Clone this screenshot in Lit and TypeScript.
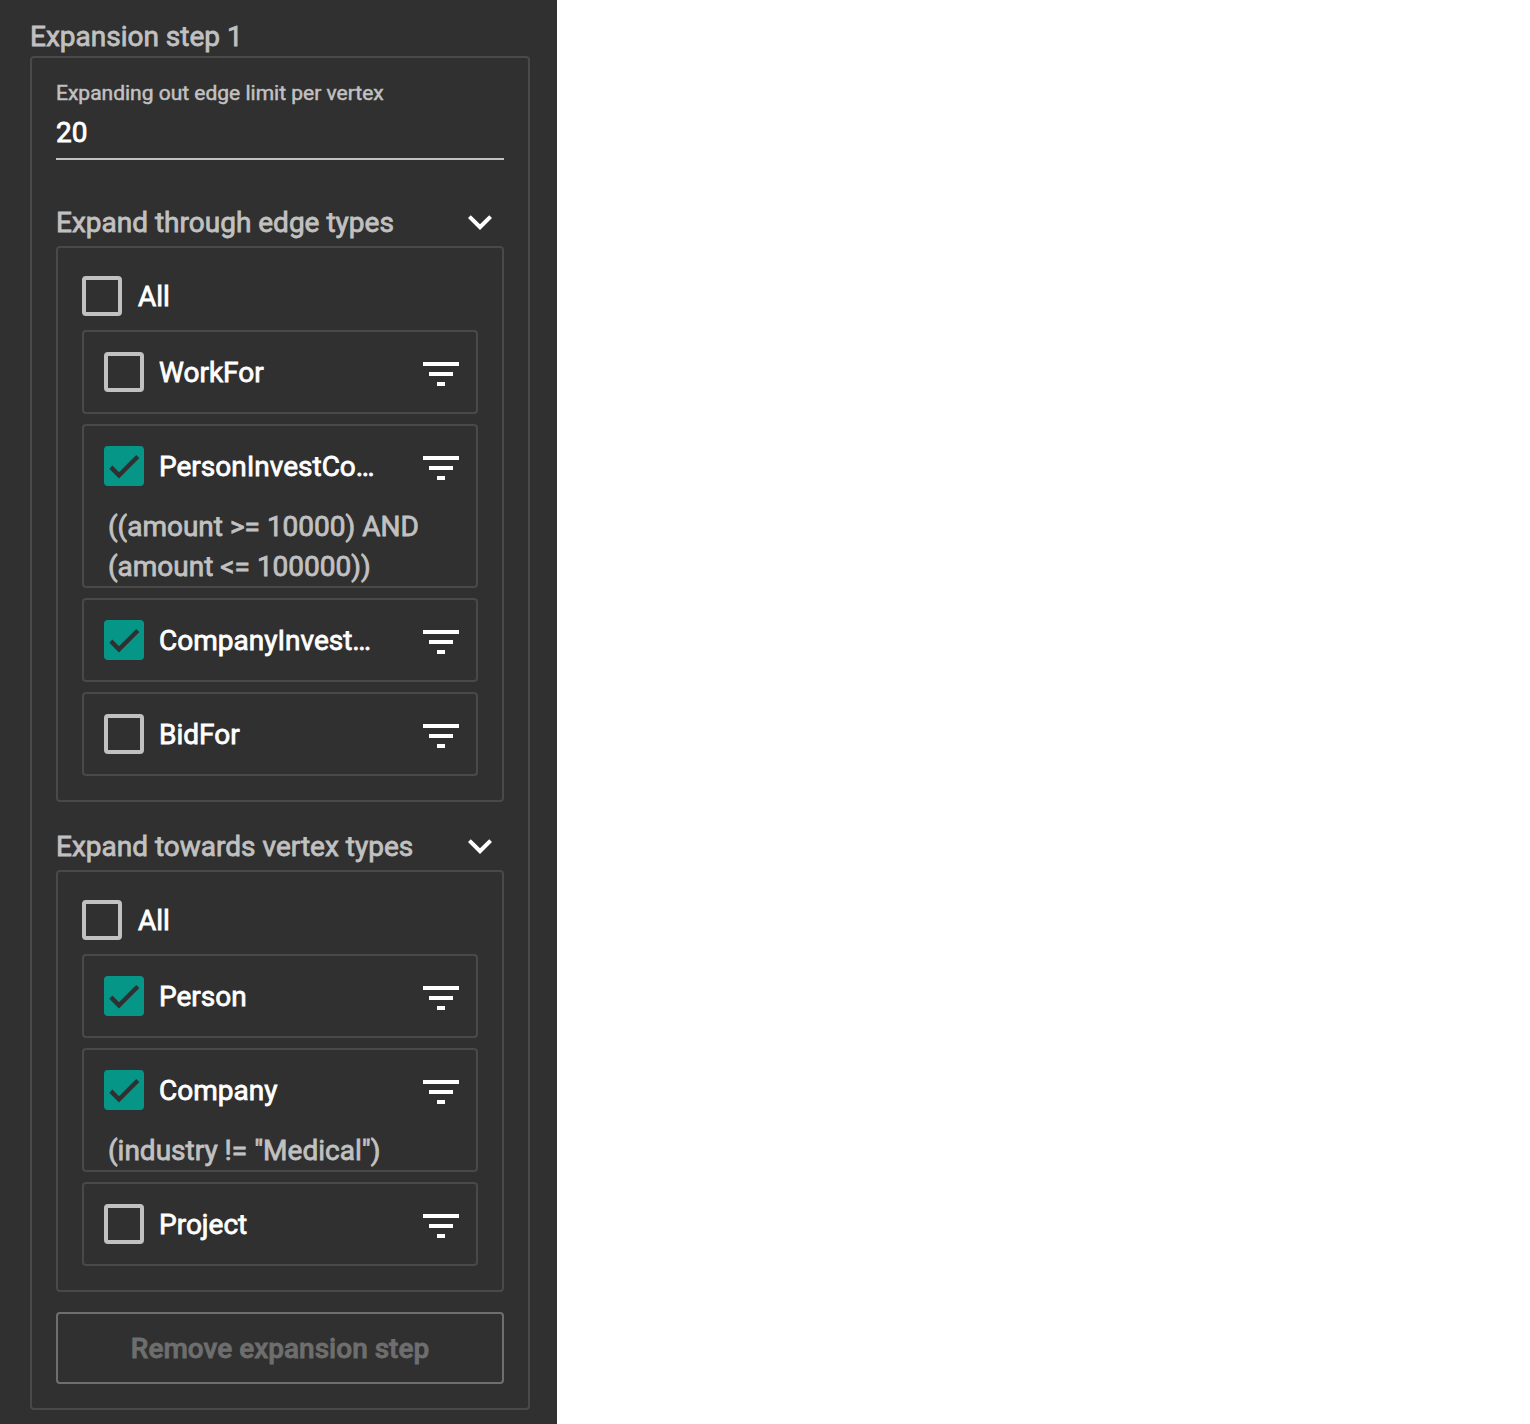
import { LitElement, html, css, nothing } from "lit";
import { customElement, property } from "lit/decorators.js";

interface TypeOption {
  name: string;
  checked: boolean;
  filter?: string;
}

const EDGE_TYPES: TypeOption[] = [
  { name: "WorkFor", checked: false },
  {
    name: "PersonInvestCo…",
    checked: true,
    filter: "((amount >= 10000) AND (amount <= 100000))",
  },
  { name: "CompanyInvest…", checked: true },
  { name: "BidFor", checked: false },
];

const VERTEX_TYPES: TypeOption[] = [
  { name: "Person", checked: true },
  { name: "Company", checked: true, filter: '(industry != "Medical")' },
  { name: "Project", checked: false },
];

@customElement("check-box")
class CheckBox extends LitElement {
  @property({ type: Boolean }) checked = false;

  static styles = css`
    :host {
      display: block;
      flex: none;
      width: 40px;
      height: 40px;
    }
    .box {
      box-sizing: border-box;
      width: 40px;
      height: 40px;
      border: 4px solid #c1c1c1;
      border-radius: 4px;
    }
    .box.on {
      border: 0;
      background: #069688;
    }
    .tick {
      display: block;
      width: 40px;
      height: 40px;
    }
  `;

  render() {
    return this.checked
      ? html`<div class="box on">
          <svg class="tick" viewBox="0 0 24 24">
            <path
              d="M4.1 12.7 9 17.6 20.3 6.3"
              fill="none"
              stroke="#303030"
              stroke-width="2.67"
            />
          </svg>
        </div>`
      : html`<div class="box"></div>`;
  }
}

@customElement("type-group")
class TypeGroup extends LitElement {
  @property() heading = "";
  @property({ attribute: false }) options: TypeOption[] = [];

  static styles = css`
    :host {
      display: block;
    }
    .head {
      display: flex;
      align-items: center;
      justify-content: space-between;
      height: 48px;
      color: #c1c1c1;
    }
    .text {
      padding-top: 2px;
    }
    .icon {
      display: block;
      flex: none;
      width: 48px;
      height: 48px;
      fill: #fff;
    }
    .group {
      display: flex;
      flex-direction: column;
      gap: 10px;
      padding: 24px;
      border: 2px solid #494949;
      border-radius: 4px;
    }
    .all {
      display: flex;
      align-items: center;
      gap: 16px;
      height: 48px;
    }
    .item {
      border: 2px solid #494949;
      border-radius: 4px;
    }
    .row {
      display: flex;
      align-items: center;
      height: 80px;
      padding: 0 11px 0 20px;
    }
    .name {
      margin-left: 15px;
      white-space: nowrap;
    }
    .row .icon {
      margin: 4px 0 0 auto;
    }
    .filter {
      margin-bottom: -1px;
      padding: 1px 24px 0;
      color: #c1c1c1;
    }
  `;

  render() {
    return html`
      <div class="head">
        <span class="text">${this.heading}</span>
        <svg class="icon" viewBox="0 0 24 24">
          <path d="M16.59 8.59L12 13.17 7.41 8.59 6 10l6 6 6-6z" />
        </svg>
      </div>
      <div class="group">
        <div class="all">
          <check-box></check-box><span class="text">All</span>
        </div>
        ${this.options.map(
          (o) => html`<div class="item">
            <div class="row">
              <check-box ?checked=${o.checked}></check-box>
              <span class="name text">${o.name}</span>
              <svg class="icon" viewBox="0 0 24 24">
                <path d="M10 18h4v-2h-4v2zM3 6v2h18V6H3zm3 7h12v-2H6v2z" />
              </svg>
            </div>
            ${o.filter ? html`<div class="filter">${o.filter}</div>` : nothing}
          </div>`
        )}
      </div>
    `;
  }
}

@customElement("app-root")
class AppRoot extends LitElement {
  static styles = css`
    :host {
      display: block;
      background: #fff;
    }
    .panel {
      box-sizing: border-box;
      width: 557px;
      height: 1424px;
      padding: 17px 27px 0 30px;
      background: #303030;
      color: #fff;
      font: 400 28px/40px Roboto, "Liberation Sans", sans-serif;
      -webkit-text-stroke: 0.8px currentColor;
    }
    .title {
      margin-bottom: -1px;
      color: #c1c1c1;
    }
    .step {
      display: flex;
      flex-direction: column;
      gap: 20px;
      padding: 20px 24px 24px;
      border: 2px solid #494949;
      border-radius: 4px;
    }
    .field {
      margin-bottom: 18px;
      border-bottom: 2px solid #c1c1c1;
      padding-bottom: 5px;
    }
    .label {
      margin-bottom: 5px;
      color: #c1c1c1;
      font-size: 21px;
      line-height: 30px;
      -webkit-text-stroke-width: 0.5px;
    }
    .remove {
      display: block;
      box-sizing: border-box;
      width: 100%;
      height: 72px;
      padding: 2px 0 0;
      border: 2px solid #6e6e6e;
      border-radius: 4px;
      background: none;
      color: #6e6e6e;
      font: inherit;
      font-weight: 500;
      -webkit-text-stroke: inherit;
    }
  `;

  render() {
    return html`
      <div class="panel">
        <div class="title">Expansion step 1</div>
        <div class="step">
          <div class="field">
            <div class="label">Expanding out edge limit per vertex</div>
            <div class="value">20</div>
          </div>
          <type-group
            heading="Expand through edge types"
            .options=${EDGE_TYPES}
          ></type-group>
          <type-group
            heading="Expand towards vertex types"
            .options=${VERTEX_TYPES}
          ></type-group>
          <button class="remove" disabled>Remove expansion step</button>
        </div>
      </div>
    `;
  }
}
